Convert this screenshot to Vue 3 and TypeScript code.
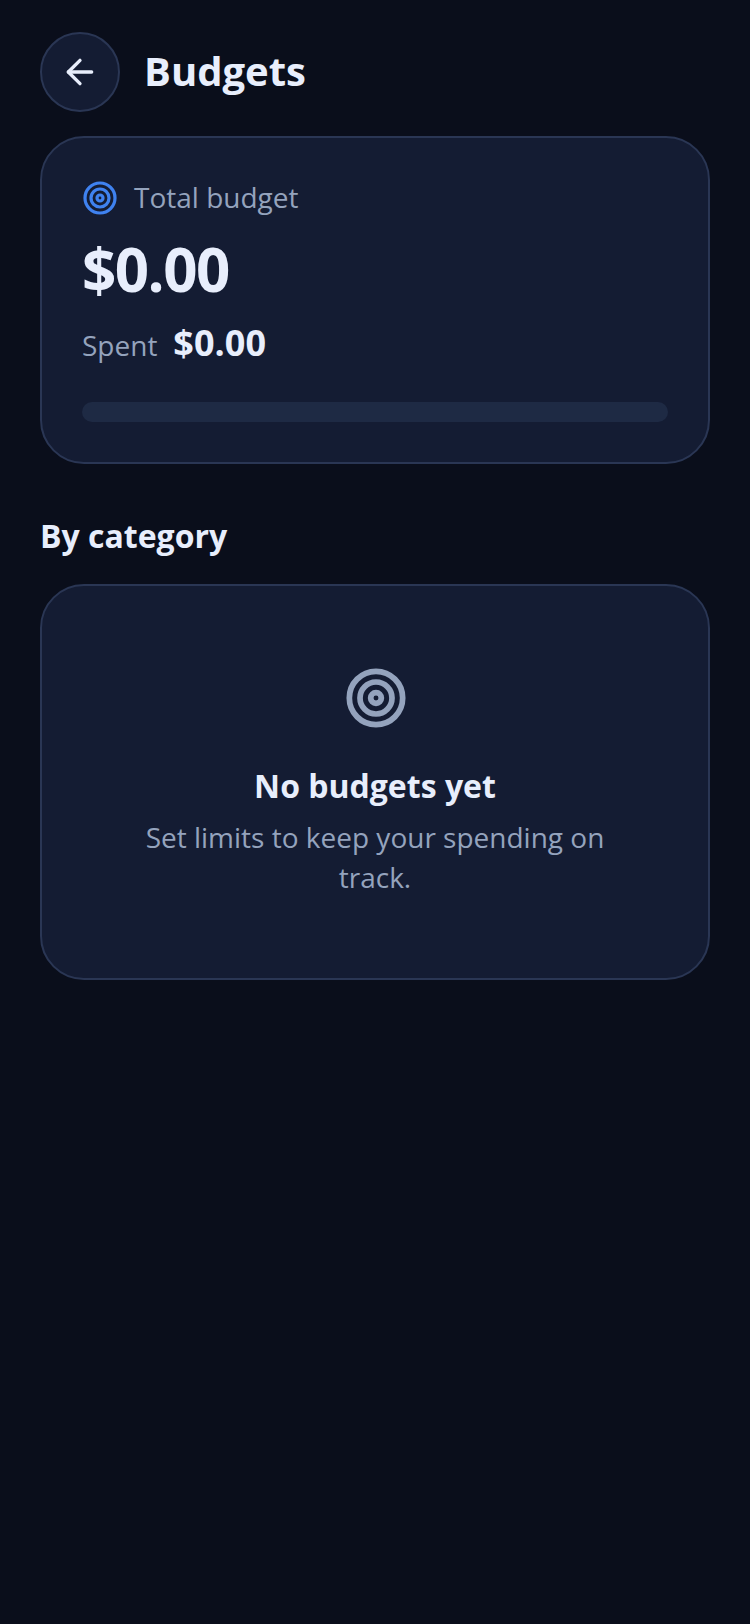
<template>
  <div class="page">
    <!-- header -->
    <header class="header">
      <button class="back-button" aria-label="Back">
        <svg width="40" height="40" viewBox="0 0 24 24" fill="none" stroke="currentColor" stroke-width="2" stroke-linecap="round" stroke-linejoin="round">
          <path d="M19 12H5" />
          <path d="M12 19l-7-7 7-7" />
        </svg>
      </button>
      <h1 class="title">Budgets</h1>
    </header>

    <!-- total -->
    <section class="card total-card">
      <div class="total-label">
        <svg class="target" width="36" height="36" viewBox="0 0 24 24" fill="none" stroke="currentColor" stroke-width="2.15">
          <circle cx="12" cy="12" r="10" />
          <circle cx="12" cy="12" r="6" />
          <circle cx="12" cy="12" r="2" />
        </svg>
        <span>Total budget</span>
      </div>
      <div class="total-amount">{{ money(totalBudget) }}</div>
      <div class="spent-row">
        <span class="spent-label">Spent</span>
        <span class="spent-value">{{ money(spent) }}</span>
      </div>
      <div class="progress"></div>
    </section>

    <h2 class="section-title">By category</h2>

    <!-- empty state -->
    <section class="card empty-card">
      <svg class="empty-icon" width="64" height="64" viewBox="0 0 24 24" fill="none" stroke="currentColor" stroke-width="2.15">
        <circle cx="12" cy="12" r="10" />
        <circle cx="12" cy="12" r="6" />
        <circle cx="12" cy="12" r="2" />
      </svg>
      <h3 class="empty-title">No budgets yet</h3>
      <p class="empty-text">Set limits to keep your spending on track.</p>
    </section>
  </div>
</template>

<script setup lang="ts">
const totalBudget: number = 0;
const spent: number = 0;

const money = (value: number): string => `$${value.toFixed(2)}`;
</script>

<style>
html,
body {
  background: #0a0e1b;
}
</style>

<style scoped>
.page {
  box-sizing: border-box;
  min-height: 1624px;
  padding: 32px 40px;
  background: #0a0e1b;
  color: #e8eefc;
  font-family: "Open Sans", "Noto Sans", sans-serif;
}

.header {
  display: flex;
  align-items: center;
  gap: 24px;
  margin-bottom: 24px;
}

.back-button {
  display: flex;
  align-items: center;
  justify-content: center;
  box-sizing: border-box;
  width: 80px;
  height: 80px;
  padding: 0;
  border: 2px solid #2a3654;
  border-radius: 50%;
  background: #141c33;
  color: #e8eefc;
}

.title {
  margin: 0 0 2px;
  font-size: 40px;
  line-height: 56px;
  font-weight: 700;
}

.card {
  box-sizing: border-box;
  border: 2px solid #2a3654;
  border-radius: 44px;
  background: #141c33;
}

.total-card {
  padding: 40px;
}

.total-label {
  display: flex;
  align-items: center;
  gap: 16px;
  height: 40px;
  color: #94a3bd;
  font-size: 28px;
  line-height: 40px;
}

.total-label span {
  padding-bottom: 2px;
}

.target {
  color: #3f82f0;
  flex-shrink: 0;
}

.total-amount {
  margin-top: 9px;
  font-size: 60px;
  line-height: 84px;
  font-weight: 700;
  letter-spacing: -1.5px;
}

.spent-row {
  display: flex;
  align-items: baseline;
  gap: 16px;
  margin-top: 7px;
}

.spent-label {
  color: #94a3bd;
  font-size: 28px;
  line-height: 40px;
}

.spent-value {
  font-size: 36px;
  line-height: 50px;
  font-weight: 700;
}

.progress {
  height: 20px;
  margin-top: 34px;
  border-radius: 10px;
  background: #1e2a44;
}

.section-title {
  margin: 48px 0 24px;
  font-size: 32px;
  line-height: 48px;
  font-weight: 700;
}

.empty-card {
  display: flex;
  flex-direction: column;
  align-items: center;
  padding: 80px 80px 81px;
  text-align: center;
}

.empty-icon {
  margin-left: 2px;
  color: #94a3bd;
  flex-shrink: 0;
}

.empty-title {
  margin: 32px 0 0;
  font-size: 32px;
  line-height: 48px;
  font-weight: 700;
}

.empty-text {
  margin: 7px 0 0;
  color: #94a3bd;
  font-size: 28px;
  line-height: 40px;
}
</style>
